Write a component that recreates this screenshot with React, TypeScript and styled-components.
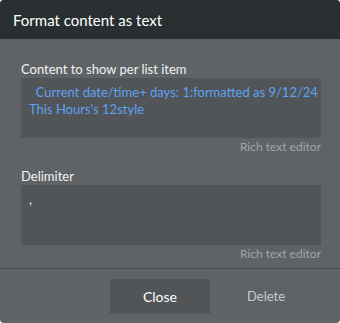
import styled, { createGlobalStyle } from "styled-components";

const Global = createGlobalStyle`
  html, body {
    margin: 0;
    padding: 0;
    background: #ffffff;
  }
  body {
    font-family: Lato, "Open Sans", sans-serif;
  }
`;

const Modal = styled.div`
  width: 340px;
  height: 323px;
  background-color: #5f6366;
  border-radius: 4px;
  overflow: hidden;
  display: flex;
  flex-direction: column;
`;

const Header = styled.div`
  height: 39px;
  background-color: #292e31;
  color: #ffffff;
  font-size: 15px;
  display: flex;
  align-items: center;
  padding-left: 13px;
  flex-shrink: 0;
`;

const Body = styled.div`
  padding: 22px 19px 0 21px;
  display: flex;
  flex-direction: column;
`;

const Field = styled.div`
  display: flex;
  flex-direction: column;
  margin-bottom: ${(props: { $gap?: number }) => props.$gap ?? 0}px;
`;

const Label = styled.div`
  color: #f2f2f2;
  font-size: 13px;
  line-height: 17px;
`;

const Editor = styled.div`
  background-color: #515558;
  height: 60px;
  padding: 6px 8px;
  box-sizing: border-box;
  font-size: 13px;
  line-height: 17px;
  color: #5ea2f2;
  white-space: nowrap;
`;

const Delim = styled.span`
  color: #f2f2f2;
  font-size: 13px;
`;

const Hint = styled.div`
  text-align: right;
  color: #a3a6a8;
  font-size: 12px;
  line-height: 14px;
  margin-top: 2px;
`;

const Footer = styled.div`
  margin-top: auto;
  border-top: 1px solid #45494c;
  height: 54px;
  display: flex;
  align-items: center;
  padding-left: 110px;
  gap: 37px;
`;

const CloseButton = styled.button`
  width: 100px;
  height: 35px;
  background-color: #515558;
  border: none;
  color: #ffffff;
  font-family: inherit;
  font-size: 14px;
  padding: 0;
`;

const TextButton = styled.button`
  background: none;
  border: none;
  padding: 0;
  color: #c9cbcd;
  font-family: inherit;
  font-size: 13px;
`;

export default function App() {
  return (
    <>
      <Global />
      <Modal>
        <Header>Format content as text</Header>
        <Body>
          <Field $gap={14}>
            <Label>Content to show per list item</Label>
            <Editor>
              &nbsp; Current date/time+ days: 1:formatted as 9/12/24
              <br />
              This Hours's 12style
            </Editor>
            <Hint>Rich text editor</Hint>
          </Field>
          <Field>
            <Label>Delimiter</Label>
            <Editor>
              <Delim>,</Delim>
            </Editor>
            <Hint>Rich text editor</Hint>
          </Field>
        </Body>
        <Footer>
          <CloseButton>Close</CloseButton>
          <TextButton>Delete</TextButton>
        </Footer>
      </Modal>
    </>
  );
}
